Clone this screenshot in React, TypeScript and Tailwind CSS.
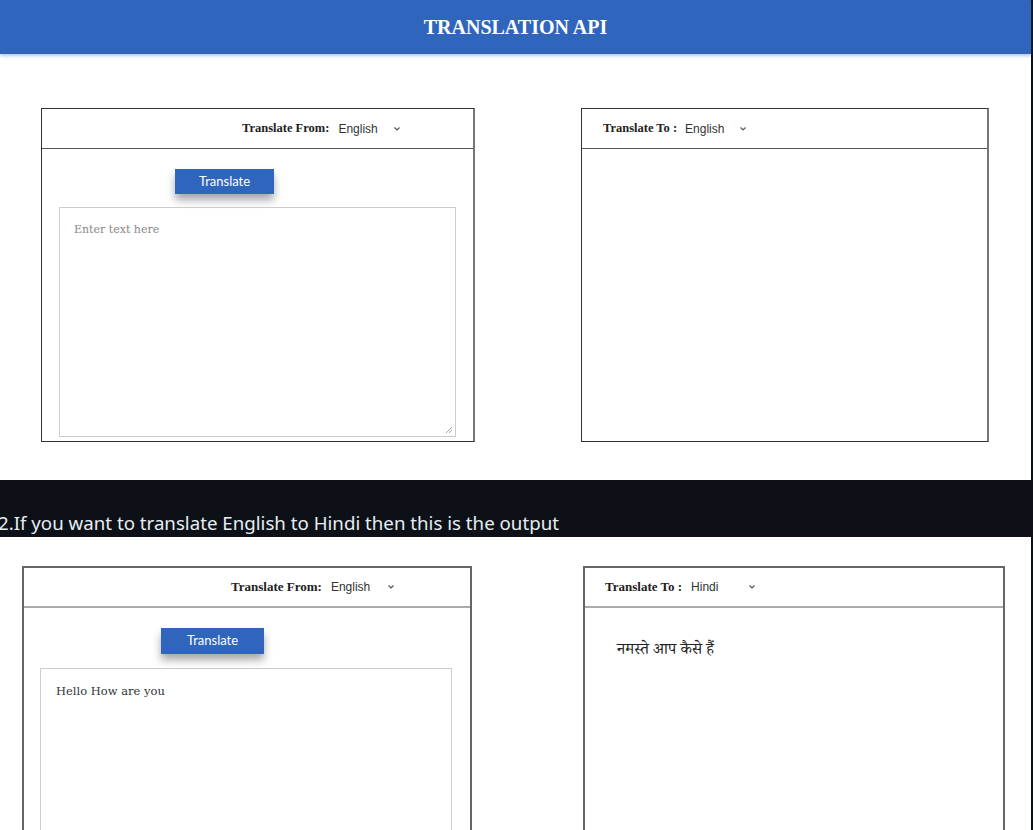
import React from 'react';

const serif = 'font-["Liberation_Serif","Times_New_Roman",serif]';
const bodySerif = 'font-["DejaVu_Serif","Liberation_Serif",serif]';

const Chevron = () => (
  <svg width="8" height="6" viewBox="0 0 8 6" className="inline-block">
    <path d="M1.5 1.5 L4 4 L6.5 1.5" fill="none" stroke="#555" strokeWidth="1.2" />
  </svg>
);

const LangSelect = ({
  label,
  value,
  size,
  gap,
  chevronGap,
}: {
  label: string;
  value: string;
  size: string;
  gap: string;
  chevronGap: string;
}) => (
  <div className="flex items-center">
    <span className={`${serif} font-bold ${size} text-[#222]`}>{label}</span>
    <span className={`${gap} font-["Liberation_Sans",Arial,sans-serif] text-[12px] text-[#333]`}>{value}</span>
    <span className={`${chevronGap} flex items-center`}>
      <Chevron />
    </span>
  </div>
);

const TranslateButton = ({ size }: { size: string }) => (
  <button
    className={`${size} bg-[#3065bd] text-white text-[13px] font-["Lato","Open_Sans",sans-serif] shadow-[0_6px_8px_rgba(0,0,0,0.35)]`}
  >
    Translate
  </button>
);

const App = () => {
  return (
    <div className="w-[1033px] h-[830px] overflow-hidden bg-[#0d1117] flex">
      <div className="w-[1031px] flex flex-col">
        {/* first screenshot */}
        <div className="h-[480px] bg-white flex flex-col">
          <header className="h-[54px] bg-[#3065bd] flex items-center justify-center shadow-[0_2px_3px_rgba(48,101,189,0.35)]">
            <h1 className={`${serif} font-bold text-white text-[20px]`}>TRANSLATION API</h1>
          </header>
          <div className="flex pt-[54px]">
            <div className="ml-[41px] w-[434px] h-[334px] border border-[#333] border-l-[1.5px] border-r-2 border-r-[#777] flex flex-col">
              <div className="h-[40px] border-b border-[#555] flex items-center pl-[200px]">
                <LangSelect label="Translate From:" value="English" size="text-[12.5px]" gap="ml-[9px]" chevronGap="ml-[15px]" />
              </div>
              <div className="pt-[19px] pl-[133px]">
                <TranslateButton size="w-[99px] h-[25px]" />
              </div>
              <div className="mt-[13px] ml-[17px] w-[397px] h-[230px] border border-[#ccc] relative">
                <span className={`absolute left-[14px] top-[14px] ${bodySerif} text-[11px] text-[#888]`}>Enter text here</span>
                <svg width="8" height="8" viewBox="0 0 8 8" className="absolute right-[2px] bottom-[2px]">
                  <path d="M7 1 L1 7 M7 4 L4 7" stroke="#aaa" strokeWidth="1" />
                </svg>
              </div>
            </div>
            <div className="ml-[106px] w-[408px] h-[334px] border border-[#333] border-l-[1.5px] border-r-2 border-r-[#777] flex flex-col">
              <div className="h-[40px] border-b border-[#555] flex items-center pl-[21px]">
                <LangSelect label="Translate To :" value="English" size="text-[12.5px]" gap="ml-[8px]" chevronGap="ml-[15px]" />
              </div>
            </div>
          </div>
        </div>

        {/* readme text band */}
        <div className="h-[57px] bg-[#0d1117] flex items-end pb-[1px]">
          <p className='ml-[-2px] text-[18.7px] text-[#e6edf3] font-["Noto_Sans","Open_Sans",sans-serif] leading-[26px]'>
            2.If you want to translate English to Hindi then this is the output
          </p>
        </div>

        {/* second screenshot */}
        <div className="flex-1 bg-white flex pt-[29px]">
          <div className="ml-[22px] w-[450px] border-2 border-b-0 border-[#666] flex flex-col">
            <div className="h-[40px] border-b-2 border-[#aaa] flex items-center pl-[207px]">
              <LangSelect label="Translate From:" value="English" size="text-[13px]" gap="ml-[9px]" chevronGap="ml-[17px]" />
            </div>
            <div className="pt-[19px] pl-[137px]">
              <TranslateButton size="w-[103px] h-[26px]" />
            </div>
            <div className="mt-[14px] ml-[16px] w-[412px] flex-1 border border-b-0 border-[#ccc] relative">
              <span className={`absolute left-[15px] top-[14px] ${bodySerif} text-[11.5px] text-[#333]`}>Hello How are you</span>
            </div>
          </div>
          <div className="ml-[111px] w-[422px] border-2 border-b-0 border-[#666] flex flex-col">
            <div className="h-[40px] border-b-2 border-[#aaa] flex items-center pl-[20px]">
              <LangSelect label="Translate To :" value="Hindi" size="text-[13px]" gap="ml-[9px]" chevronGap="ml-[30px]" />
            </div>
            <p
              className="mt-[32px] ml-[32px] text-[16px] text-[#222]"
              style={{ fontFamily: '"Noto Serif Devanagari","Noto Sans Devanagari","Liberation Serif",serif' }}
            >
              नमस्ते आप कैसे हैं
            </p>
          </div>
        </div>
      </div>
    </div>
  );
};

export default App;
